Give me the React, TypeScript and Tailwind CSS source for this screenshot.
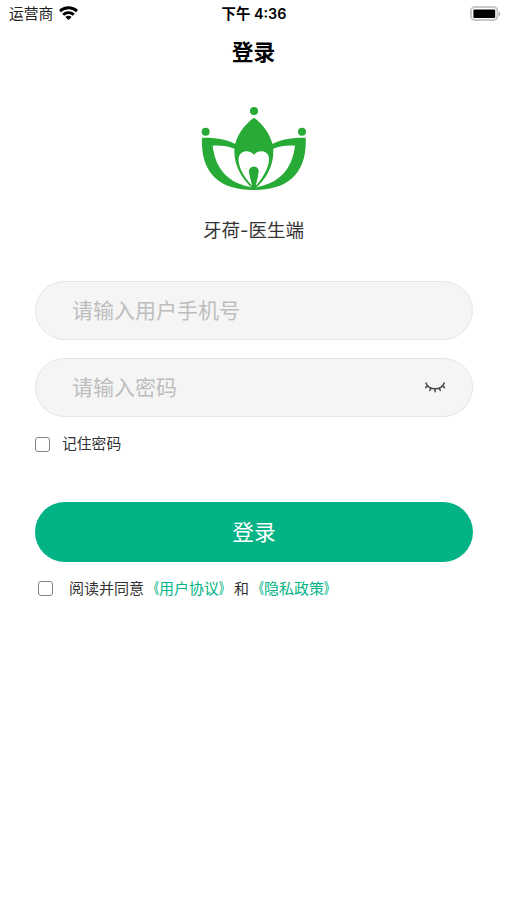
import { useState } from "react";

type TextFieldProps = {
  type: string;
  placeholder: string;
  children?: React.ReactNode;
};

type CheckBoxProps = {
  checked: boolean;
  label: string;
  onChange: (checked: boolean) => void;
};

function StatusBar(): React.JSX.Element {
  return (
    <header className="grid h-[27px] grid-cols-3 items-center pl-[9px] pr-[6px] text-black">
      <div className="flex items-center gap-[6px]">
        <span className="mt-[2px] text-[14.8px] leading-none text-[#222]">运营商</span>
        <svg width="19" height="14" viewBox="0 0 19 14" fill="none" stroke="currentColor" strokeWidth="2.9" aria-hidden="true">
          <path d="M1 5.1C5.7.7 13.3.7 18 5.1" />
          <path d="M4.2 8.7c3-2.8 7.6-2.8 10.6 0" />
          <path d="M6.4 10.9c1.6-1.6 4.6-1.6 6.2 0L9.5 13.9z" fill="currentColor" stroke="none" />
        </svg>
      </div>
      <span className="mt-[2px] -ml-[2px] text-center text-[14.4px] leading-none font-semibold whitespace-nowrap">
        下午 4:36
      </span>
      <svg className="justify-self-end" width="31" height="16" viewBox="0 0 31 16" aria-hidden="true">
        <rect x="1" y="1.1" width="26.4" height="13" rx="4" fill="#fff" stroke="#c8c8c8" strokeWidth="2" />
        <rect x="3.4" y="3.4" width="21.8" height="8.6" rx="1" fill="#000" />
        <path d="M28.6 5.4c2.2 1.2 2.2 3.8 0 5z" fill="#aaa" />
      </svg>
    </header>
  );
}

function LotusLogo(): React.JSX.Element {
  return (
    <svg width="106" height="85" viewBox="33 33 318 255" fill="#27ab36" aria-hidden="true">
      <circle cx="192" cy="48" r="12" />
      <circle cx="47" cy="110" r="12" />
      <circle cx="336" cy="110" r="12" />
      {/* Side petals */}
      <path
        fillRule="evenodd"
        d="M36 128C80 127 114 134 141 150L133 161C114 153 93 151 68 152C75 209 103 260 178 275L192 279L192 285C91 286 31 236 36 128Z"
      />
      <path
        fillRule="evenodd"
        d="M347 128C303 127 269 134 242 150L250 161C269 153 290 151 315 152C308 209 280 260 205 275L191 279L191 285C292 286 352 236 347 128Z"
      />
      {/* Centre petal with the tooth cut out */}
      <path
        fillRule="evenodd"
        d="M192 68C220 88 238 114 249 151C255 202 235 247 192 284C149 247 128 202 134 151C144 114 164 88 192 68ZM192 179C180 165 154 164 147 184C141 205 156 241 187 273C184 260 178 241 177 229C177 211 206 211 206 229C205 241 200 260 197 273C226 241 241 205 236 184C230 165 204 165 192 179Z"
      />
      <path d="M192 215C181 215 177 222 178 231C180 248 186 263 188 278L196 278C198 263 203 248 205 231C206 222 202 215 192 215Z" />
    </svg>
  );
}

function ClosedEyeIcon(): React.JSX.Element {
  return (
    <svg width="22" height="14" viewBox="0 0 22 14" fill="none" stroke="#4a4a4a" strokeWidth="1.5" strokeLinecap="round" aria-hidden="true">
      <path d="M2 2C4.6 9.8 17.6 9.8 20.2 2" />
      <path d="M3.6 4.8 1.7 6.6M7 7.2 5.8 9.5M11.1 7.9v2.8M15.2 7.2l1.1 2.3M18.6 4.8l1.9 1.8" />
    </svg>
  );
}

function TextField({ type, placeholder, children }: TextFieldProps): React.JSX.Element {
  return (
    <div className="flex h-[59px] items-center rounded-full border border-[#e5e5e5] bg-[#f5f5f5] pr-[26px] pl-9">
      <input
        type={type}
        placeholder={placeholder}
        className="min-w-0 flex-1 bg-transparent pt-px text-[21px] text-[#333] outline-none placeholder:text-[#bdbdbd]"
      />
      {children}
    </div>
  );
}

function CheckBox({ checked, label, onChange }: CheckBoxProps): React.JSX.Element {
  return (
    <input
      type="checkbox"
      aria-label={label}
      checked={checked}
      onChange={(e) => onChange(e.target.checked)}
      className="h-[15px] w-[15px] shrink-0 appearance-none rounded-[3px] border border-[#858585] bg-white checked:bg-[#03b386]"
    />
  );
}

function PolicyLink({ title }: { title: string }): React.JSX.Element {
  return (
    <a className="text-[#03b386]">
      <span className="inline-block origin-right scale-x-[0.68] font-medium">《</span>
      {title}
      <span className="inline-block origin-left scale-x-[0.68] font-medium">》</span>
    </a>
  );
}

export default function App(): React.JSX.Element {
  const [remember, setRemember] = useState(false);
  const [agreed, setAgreed] = useState(false);
  const [visible, setVisible] = useState(false);

  return (
    <div className="min-h-screen bg-white font-['Inter','Noto_Sans_CJK_SC',sans-serif] text-[#333]">
      <StatusBar />
      <h1 className="flex h-[50px] items-center justify-center text-[21.8px] font-bold text-black">
        登录
      </h1>

      <div className="flex flex-col items-center pt-[29px]">
        <LotusLogo />
        <p className="mt-[24px] text-[18.5px] leading-[30px]">牙荷-医生端</p>
      </div>

      <form className="pt-9 pr-[34px] pl-[35px]" onSubmit={(e) => e.preventDefault()}>
        <div className="grid gap-[18px]">
          <TextField type="tel" placeholder="请输入用户手机号" />
          <TextField type={visible ? "text" : "password"} placeholder="请输入密码">
            <button type="button" aria-label="显示密码" onClick={() => setVisible(!visible)}>
              <ClosedEyeIcon />
            </button>
          </TextField>
        </div>

        <div className="mt-4 flex h-[22px] items-center gap-3 text-[14.8px]">
          <CheckBox checked={remember} label="记住密码" onChange={setRemember} />
          <span>记住密码</span>
        </div>

        <button
          type="submit"
          className="mt-[47px] flex h-[60px] w-full items-center justify-center rounded-full bg-[#03b386] text-[21.8px] text-white"
        >
          登录
        </button>

        <div className="mt-[15px] flex h-[22px] items-center pl-[3px] text-[15px] whitespace-nowrap">
          <CheckBox checked={agreed} label="阅读并同意" onChange={setAgreed} />
          <p className="ml-4 pt-[2px]">
            阅读并同意
            <PolicyLink title="用户协议" />
            和
            <PolicyLink title="隐私政策" />
          </p>
        </div>
      </form>
    </div>
  );
}
